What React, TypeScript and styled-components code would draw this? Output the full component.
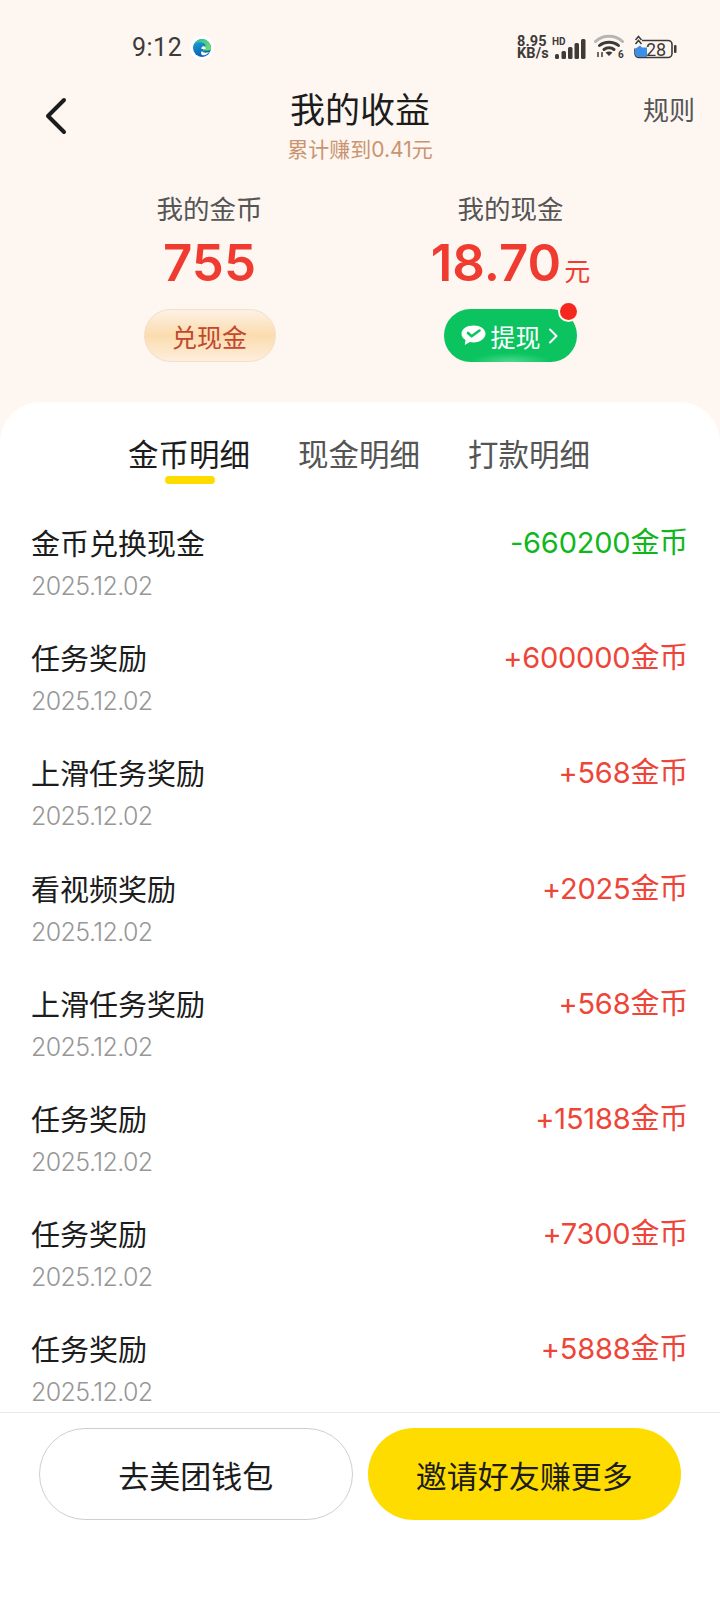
import React, {FC} from 'react';
import styled, {createGlobalStyle} from 'styled-components';

const GlobalStyle = createGlobalStyle`
    html, body {
        margin: 0;
        padding: 0;
        background: #fef6f1;
    }
    * {
        box-sizing: border-box;
    }
`;

const Page = styled.div`
    width: 720px;
    height: 1600px;
    display: flex;
    flex-direction: column;
    overflow: hidden;
    background: #fef6f1;
    font-family: Inter, 'Noto Sans CJK SC', sans-serif;
`;

const StatusBar = styled.div`
    height: 80px;
    padding: 16px 42px 0 132px;
    display: flex;
    align-items: center;
    justify-content: space-between;
    color: #3d3a38;
`;

const StatusLeft = styled.div`
    display: flex;
    align-items: center;
    gap: 8px;
`;

const Clock = styled.span`
    font-family: Roboto, sans-serif;
    font-size: 25px;
    line-height: 32px;
    letter-spacing: 0.5px;
`;

const StatusRight = styled.div`
    display: flex;
    align-items: center;
`;

const Speed = styled.div`
    font-family: Roboto, sans-serif;
    font-size: 14.5px;
    line-height: 12px;
    font-weight: 700;
    letter-spacing: 0.2px;
    margin-right: 3px;
`;

const Battery = styled.div`
    position: relative;
    width: 45px;
    height: 26px;
    margin-left: 8px;
`;

const BatteryLevel = styled.span`
    position: absolute;
    left: 13px;
    top: 5px;
    font-family: Roboto, sans-serif;
    font-size: 18px;
    line-height: 20px;
    color: #3d3a38;
`;

const Header = styled.header`
    display: grid;
    grid-template-columns: 120px 1fr 120px;
    padding: 9px 25px 0 44px;
    height: 106px;
`;

const BackIcon = styled.svg`
    width: 24px;
    height: 38px;
    margin-top: 8px;
`;

const TitleBlock = styled.div`
    text-align: center;
    margin-left: -19px;
`;

const Title = styled.div`
    font-size: 35px;
    line-height: 42px;
    color: #1c1c1c;
`;

const Subtitle = styled.div`
    font-size: 21px;
    line-height: 28px;
    margin-top: 5px;
    color: #c9946f;
`;

const Rules = styled.div`
    font-size: 26px;
    line-height: 36px;
    color: #555;
    text-align: right;
    margin-top: 4px;
`;

const Stats = styled.div`
    display: grid;
    grid-template-columns: 301px 301px;
    height: 216px;
    padding: 5px 0 0 59px;
`;

const Stat = styled.div`
    display: flex;
    flex-direction: column;
    align-items: center;
`;

const StatLabel = styled.div`
    font-size: 26.5px;
    line-height: 36px;
    color: #555;
`;

const StatValue = styled.div`
    height: 64px;
    font-size: 51px;
    line-height: 64px;
    font-weight: 600;
    color: #f03c30;
    margin-top: 4px;
    white-space: nowrap;
`;

const Unit = styled.span`
    font-size: 26px;
    line-height: 1;
    font-weight: 400;
    margin-left: 3px;
`;

const ExchangeButton = styled.div`
    width: 132px;
    height: 53px;
    margin-top: 14px;
    border-radius: 27px;
    border: 1px solid #f3dfc9;
    background: linear-gradient(180deg, #fdf1e4 0%, #fbdcae 50%, #fdeedd 100%);
    color: #c4472d;
    font-size: 25px;
    display: flex;
    align-items: center;
    justify-content: center;
`;

const WithdrawButton = styled.div`
    position: relative;
    width: 133px;
    height: 53px;
    margin-top: 14px;
    border-radius: 27px;
    background: radial-gradient(ellipse 40px 9px at 50% 100%, #4fd98f 0%, rgba(79, 217, 143, 0) 100%), #0bc45f;
    color: #fff;
    font-size: 25px;
    display: flex;
    align-items: center;
    justify-content: center;
    gap: 4px;
`;

const RedDot = styled.span`
    position: absolute;
    right: 0;
    top: -6px;
    width: 17px;
    height: 17px;
    border-radius: 50%;
    background: #f5281e;
    box-shadow: 0 0 0 2px #fef6f1;
`;

const Panel = styled.section`
    flex: 1;
    min-height: 0;
    display: flex;
    flex-direction: column;
    background: #fff;
    border-radius: 40px 40px 0 0;
`;

const Tabs = styled.div`
    display: flex;
    justify-content: center;
    gap: 48px;
    height: 96px;
    padding: 33px 2px 0 0;
`;

const Tab = styled.div<{$active?: boolean}>`
    position: relative;
    font-size: 30.5px;
    line-height: 40px;
    color: ${props => (props.$active ? '#1c1c1c' : '#555')};
`;

const TabMark = styled.span`
    position: absolute;
    left: 37px;
    top: 41px;
    width: 50px;
    height: 8px;
    border-radius: 4px;
    background: #ffdc00;
`;

const List = styled.div`
    flex: 1;
    min-height: 0;
    overflow: hidden;
    padding: 0 32px 0 31px;
`;

const Row = styled.div`
    height: 115.2px;
    padding-top: 27px;
    display: flex;
    justify-content: space-between;
`;

const RowName = styled.div`
    font-size: 29px;
    line-height: 40px;
    color: #1c1c1c;
`;

const RowDate = styled.div`
    font-size: 25px;
    line-height: 32px;
    margin-top: 5px;
    letter-spacing: -0.6px;
    font-weight: 300;
    color: #979797;
`;

const RowAmount = styled.div<{$income: boolean}>`
    font-size: 29px;
    line-height: 38px;
    margin-top: -1px;
    letter-spacing: -0.2px;
    color: ${props => (props.$income ? '#ee4539' : '#10b71c')};
`;

const Footer = styled.footer`
    height: 188px;
    padding: 15px 39px 0;
    border-top: 1px solid #e8e8e8;
    display: flex;
    gap: 15px;
    background: #fff;
`;

const FooterButton = styled.div<{$primary?: boolean}>`
    width: 314px;
    height: 92px;
    border-radius: 46px;
    border: ${props => (props.$primary ? 'none' : '1px solid #cfcfcf')};
    background: ${props => (props.$primary ? '#ffdc00' : '#fff')};
    color: #1c1c1c;
    font-size: 31px;
    display: flex;
    align-items: center;
    justify-content: center;
`;

const WifiSvg = styled.svg`
    margin-left: 8px;
`;

const ChevronSvg = styled.svg`
    margin-left: 1px;
`;

const records = [
    {name: '金币兑换现金', amount: '-660200金币'},
    {name: '任务奖励', amount: '+600000金币'},
    {name: '上滑任务奖励', amount: '+568金币'},
    {name: '看视频奖励', amount: '+2025金币'},
    {name: '上滑任务奖励', amount: '+568金币'},
    {name: '任务奖励', amount: '+15188金币'},
    {name: '任务奖励', amount: '+7300金币'},
    {name: '任务奖励', amount: '+5888金币'},
];

const EdgeIcon: FC = () => (
    <svg width="24" height="24" viewBox="0 0 24 24">
        <defs>
            <linearGradient id="edge-blue" x1="0.2" y1="0" x2="0.5" y2="1">
                <stop offset="0" stopColor="#1ba6d6" />
                <stop offset="1" stopColor="#0b5cb0" />
            </linearGradient>
            <linearGradient id="edge-green" x1="0" y1="0" x2="1" y2="0.6">
                <stop offset="0" stopColor="#27b5b0" />
                <stop offset="1" stopColor="#6bdc6a" />
            </linearGradient>
        </defs>
        <circle cx="12" cy="12" r="12" fill="#fff" />
        <circle cx="12" cy="12" r="9" fill="url(#edge-blue)" />
        <path d="M4 8C6 4.500 9 3 12 3c5 0 9 4 9 9 0 1.700-1.200 2.500-3 2.500h-5c-.5-2.500 2.500-3 2.500-5C15.500 6.500 8 5 4 8z" fill="url(#edge-green)" />
        <path d="M12.500 10.500c2.200-.5 3.500.5 3 2.500h-4c-.2-1 .2-2 1-2.500zM12 15c1 1.800 4 2.300 7 1-1.500 2.500-4 3.500-6.500 3.300-1.800-.8-1.800-3-.5-4.300z" fill="#fff" />
    </svg>
);

const SignalIcon: FC = () => (
    <svg width="34" height="24" viewBox="0 0 34 24">
        <text x="0" y="9" fontSize="10" fontWeight="700" fill="#3d3a38" fontFamily="Roboto, sans-serif">
            HD
        </text>
        <g fill="#3d3a38">
            <rect x="3" y="18" width="4" height="5" rx="1.500" />
            <rect x="9.500" y="15" width="4.500" height="8" rx="1.500" />
            <rect x="16" y="11" width="4.500" height="12" rx="1.500" />
            <rect x="22.500" y="7" width="4.500" height="16" rx="1.500" />
            <rect x="29" y="3" width="4.500" height="20" rx="1.500" />
        </g>
    </svg>
);

const WifiIcon: FC = () => (
    <WifiSvg width="31" height="28" viewBox="0 0 31 28" fill="none">
        <path d="M1.500 7.500C8.500 0.500 21.500 0.500 28.500 7.500" stroke="#b8b5b2" strokeWidth="3" strokeLinecap="round" />
        <path d="M5.500 11.500C10.500 7 19.500 7 24.500 11.500" stroke="#3d3a38" strokeWidth="3" strokeLinecap="round" />
        <path d="M10 15.500c2.800-2.400 7.200-2.400 10 0" stroke="#3d3a38" strokeWidth="3" strokeLinecap="round" />
        <path d="M15 22l-3.500-3.500c2-1.500 5-1.500 7 0z" fill="#3d3a38" />
        <path d="M4 18v5M8 18v5" stroke="#3d3a38" strokeWidth="1.500" />
        <text x="24" y="24" fontSize="10" fontWeight="700" fill="#3d3a38" fontFamily="Roboto, sans-serif">
            6
        </text>
    </WifiSvg>
);

const BatteryIcon: FC = () => (
    <svg width="45" height="26" viewBox="0 0 45 26" fill="none">
        <path d="M9 5.500h26a4 4 0 014 4v9a4 4 0 01-4 4H6a4 4 0 01-4-4v-5" stroke="#3d3a38" strokeWidth="1.600" />
        <path d="M2 14l5-3.500 2 2 5 0v9.500H6a4 4 0 01-4-4z" fill="#3b8fe6" />
        <path d="M2.500 5L5.500 1.500 8.500 5M2.500 9L5.500 5.500 8.500 9" stroke="#3d3a38" strokeWidth="1.500" />
        <rect x="41" y="10" width="2.500" height="8" rx="1" fill="#3d3a38" />
    </svg>
);

const WechatIcon: FC = () => (
    <svg width="25" height="21" viewBox="0 0 25 21">
        <path d="M12.500 0.500C5.800 0.500 0.500 4 0.500 8.800c0 2.600 1.500 4.800 4 6.300L3.800 20l5-3c1.200.3 2.400.4 3.700.4 6.700 0 12-3.800 12-8.600S19.200 0.500 12.500 0.500z" fill="#fff" />
        <path d="M7 8l3.600 3.200L18.500 5.500" stroke="#0bc45f" strokeWidth="2.600" fill="none" strokeLinecap="round" strokeLinejoin="round" />
    </svg>
);

const ChevronIcon: FC = () => (
    <ChevronSvg width="14" height="18" viewBox="0 0 14 18" fill="none">
        <path d="M4 2.500L10.500 9 4 15.500" stroke="#fff" strokeWidth="2" strokeLinecap="round" strokeLinejoin="round" />
    </ChevronSvg>
);

const App: FC = () => (
    <Page>
        <GlobalStyle />
        <StatusBar>
            <StatusLeft>
                <Clock>9:12</Clock>
                <EdgeIcon />
            </StatusLeft>
            <StatusRight>
                <Speed>
                    8.95
                    <br />
                    KB/s
                </Speed>
                <SignalIcon />
                <WifiIcon />
                <Battery>
                    <BatteryIcon />
                    <BatteryLevel>28</BatteryLevel>
                </Battery>
            </StatusRight>
        </StatusBar>
        <Header>
            <BackIcon viewBox="0 0 24 38" fill="none">
                <path d="M20 3L4 19l16 16" stroke="#1c1c1c" strokeWidth="4" strokeLinecap="round" strokeLinejoin="round" />
            </BackIcon>
            <TitleBlock>
                <Title>我的收益</Title>
                <Subtitle>累计赚到0.41元</Subtitle>
            </TitleBlock>
            <Rules>规则</Rules>
        </Header>
        <Stats>
            <Stat>
                <StatLabel>我的金币</StatLabel>
                <StatValue>755</StatValue>
                <ExchangeButton>兑现金</ExchangeButton>
            </Stat>
            <Stat>
                <StatLabel>我的现金</StatLabel>
                <StatValue>
                    18.70
                    <Unit>元</Unit>
                </StatValue>
                <WithdrawButton>
                    <WechatIcon />
                    提现
                    <ChevronIcon />
                    <RedDot />
                </WithdrawButton>
            </Stat>
        </Stats>
        <Panel>
            <Tabs>
                <Tab $active>
                    金币明细
                    <TabMark />
                </Tab>
                <Tab>现金明细</Tab>
                <Tab>打款明细</Tab>
            </Tabs>
            <List>
                {records.map((record, index) => (
                    <Row key={index}>
                        <div>
                            <RowName>{record.name}</RowName>
                            <RowDate>2025.12.02</RowDate>
                        </div>
                        <RowAmount $income={record.amount.startsWith('+')}>{record.amount}</RowAmount>
                    </Row>
                ))}
            </List>
            <Footer>
                <FooterButton>去美团钱包</FooterButton>
                <FooterButton $primary>邀请好友赚更多</FooterButton>
            </Footer>
        </Panel>
    </Page>
);

export default App;
